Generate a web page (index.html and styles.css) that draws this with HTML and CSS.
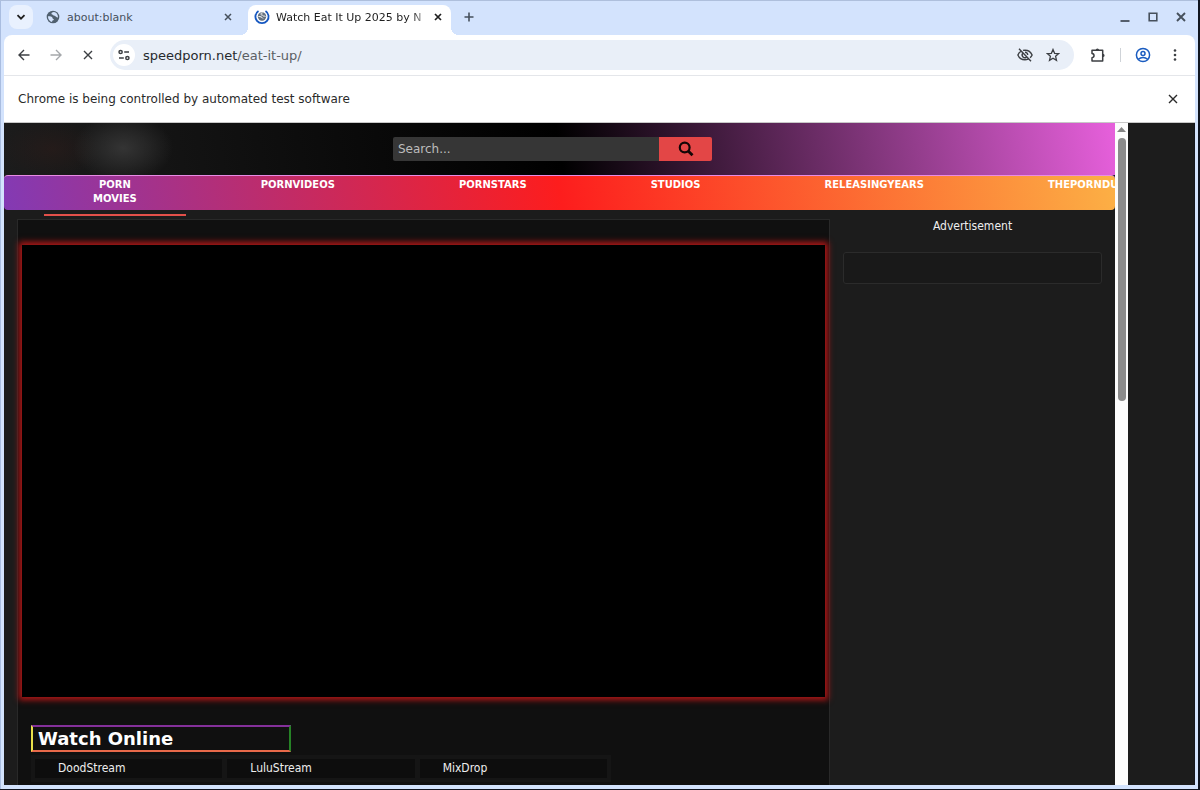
FILE: index.html
```html
<!DOCTYPE html>
<html lang="en">
<head>
<meta charset="utf-8">
<title>Watch Eat It Up 2025</title>
<link rel="stylesheet" href="styles.css">
</head>
<body>
<div class="window">
  <div class="tabstrip">
    <button class="tab-search" aria-label="Search tabs"><svg width="10" height="10" viewBox="0 0 10 10"><path d="M1.5 3.2 5 6.7 8.500 3.2" fill="none" stroke="currentColor" stroke-width="1.8"/></svg></button>
    <div class="tab">
      <svg width="14" height="14" viewBox="0 0 14 14"><circle cx="7" cy="7" r="6.300" fill="#50606f"/><path d="M8 2C6.200 2 5 3 5.600 4.200c.6.600 1.700.2 2 1.200.3 1 1.900.2 2.300 1.200.4.900 1.400.9 2.100.6C12 4.300 10.200 2.300 8 2zM2 6.300c1.300-.2 3.200-.1 4 .8.700.7.100 1.500 1.300 1.800 1.200.4.300 1.300-.6 1.500-.8.200-.3 1.200-.8 1.600C3.400 11.300 1.800 9 2 6.300z" fill="#d3e3fd"/></svg>
      <span class="tab-title">about:blank</span>
      <button class="tab-close" aria-label="Close tab"><svg width="8" height="8" viewBox="0 0 8 8"><path d="M1 1l6 6M7 1 1 7" stroke="currentColor" stroke-width="1.500"/></svg></button>
    </div>
    <div class="tab tab-active">
      <svg width="16" height="16" viewBox="0 0 16 16"><path d="M4.500 2A6.600 6.600 0 1 0 11.500 2" fill="none" stroke="#1557c0" stroke-width="1.800"/><circle cx="8" cy="7.500" r="4.200" fill="#65717d"/><path d="M8.500 4C6 4.300 6.500 6 8.500 6.200c1 1.500 2 .5 3 1.300M4.500 7.500c2 0 3.500.5 4.500 2" fill="none" stroke="#fff" stroke-width="1"/></svg>
      <span class="tab-title tab-fade">Watch Eat It Up 2025 by N</span>
      <button class="tab-close" aria-label="Close tab"><svg width="8" height="8" viewBox="0 0 8 8"><path d="M1 1l6 6M7 1 1 7" stroke="currentColor" stroke-width="1.700"/></svg></button>
    </div>
    <button class="new-tab" aria-label="New tab"><svg width="10" height="10" viewBox="0 0 10 10"><path d="M5 .5v9M.5 5h9" stroke="currentColor" stroke-width="1.600"/></svg></button>
    <div class="window-controls">
      <button aria-label="Minimize"><svg width="10" height="10" viewBox="0 0 10 10"><path d="M.5 9h9" stroke="currentColor" stroke-width="1.800"/></svg></button>
      <button aria-label="Maximize"><svg width="10" height="10" viewBox="0 0 10 10"><path d="M1.200 1.200h7.600v7.600H1.200z" fill="none" stroke="currentColor" stroke-width="1.600"/></svg></button>
      <button aria-label="Close"><svg width="10" height="10" viewBox="0 0 10 10"><path d="M1 1l8 8M9 1 1 9" stroke="currentColor" stroke-width="1.900"/></svg></button>
    </div>
  </div>

  <div class="toolbar">
    <button class="tool" aria-label="Back"><svg width="12" height="12" viewBox="0 0 12 12"><path d="M11.500 6H1.200M6 1 1 6l5 5" fill="none" stroke="currentColor" stroke-width="1.400"/></svg></button>
    <button class="tool tool-off" aria-label="Forward"><svg width="12" height="12" viewBox="0 0 12 12"><path d="M.5 6h10.300M6 1l5 5-5 5" fill="none" stroke="currentColor" stroke-width="1.400"/></svg></button>
    <button class="tool" aria-label="Stop loading"><svg width="10" height="10" viewBox="0 0 10 10"><path d="M1 1l8 8M9 1 1 9" stroke="currentColor" stroke-width="1.400"/></svg></button>
    <div class="omnibox">
      <button class="site-info" aria-label="View site information"><svg width="12" height="12" viewBox="0 0 12 12"><g fill="none" stroke="currentColor" stroke-width="1.500"><circle cx="2.600" cy="3" r="1.600"/><path d="M6.200 3H11M1 9h4.800"/><circle cx="9.400" cy="9" r="1.600"/></g></svg></button>
      <a class="url" href="#">speedporn.net<span class="url-path">/eat-it-up/</span></a>
      <button class="omni-icon" aria-label="Third-party cookies blocked"><svg width="16" height="14" viewBox="0 0 16 14"><g fill="none" stroke="currentColor" stroke-width="1.400"><path d="M4.500 3C2.800 3.900 1.500 5.300.9 7c1.200 2.900 3.900 4.800 7.100 4.800 1.200 0 2.300-.3 3.300-.7M6 2.400C6.600 2.200 7.300 2.200 8 2.200c3.200 0 5.900 1.900 7.100 4.800-.4 1.100-1.100 2-2 2.800M2 .8l12 12.400"/><path d="M5.800 5.300a2.700 2.700 0 0 0 3.800 3.800M8 4.300A2.700 2.700 0 0 1 10.700 7"/></g></svg></button>
      <button class="omni-icon" aria-label="Bookmark this tab"><svg width="14" height="14" viewBox="0 0 14 14"><path d="M7 1.500l1.600 3.800 4.100.3-3.100 2.700.9 4L7 10.200l-3.500 2.100.9-4-3.100-2.700 4.100-.3z" fill="none" stroke="currentColor" stroke-width="1.300"/></svg></button>
    </div>
    <button class="tool" aria-label="Extensions"><svg width="16" height="16" viewBox="0 0 16 16"><path d="M2 3.200h10.700V14H2v-3.300c2.700-.3 2.700-4 0-4.300z" fill="none" stroke="currentColor" stroke-width="1.500" stroke-linejoin="round"/><path d="M5.700 3.300a1.700 1.900 0 0 1 3.400 0zM12.700 6.700a1.900 1.700 0 0 1 0 3.400z" fill="currentColor"/></svg></button>
    <span class="tool-divider"></span>
    <button class="tool tool-profile" aria-label="Profile"><svg width="16" height="16" viewBox="0 0 16 16"><g fill="none" stroke="currentColor" stroke-width="1.500"><circle cx="8" cy="8" r="6.600"/><circle cx="8" cy="6.400" r="2"/><path d="M3.400 12.300c2.500-2.400 6.700-2.400 9.200 0"/></g></svg></button>
    <button class="tool" aria-label="Chrome menu"><svg width="4" height="12" viewBox="0 0 4 12"><g fill="currentColor"><circle cx="2" cy="1.500" r="1.300"/><circle cx="2" cy="6" r="1.300"/><circle cx="2" cy="10.500" r="1.300"/></g></svg></button>
  </div>

  <div class="infobar">
    <span>Chrome is being controlled by automated test software</span>
    <button class="tool" aria-label="Dismiss"><svg width="10" height="10" viewBox="0 0 10 10"><path d="M1 1l8 8M9 1 1 9" stroke="currentColor" stroke-width="1.400"/></svg></button>
  </div>

  <div class="viewport">
    <div class="site">
      <header class="site-header">
        <div class="site-logo"></div>
        <form class="search">
          <input type="text" placeholder="Search..." aria-label="Search">
          <button type="button" aria-label="Search"><svg width="16" height="16" viewBox="0 0 16 16"><circle cx="6.700" cy="6.500" r="4.900" fill="none" stroke="currentColor" stroke-width="2.200"/><path d="M10.200 10l4.300 4.300" stroke="currentColor" stroke-width="2.800"/></svg></button>
        </form>
      </header>
      <nav class="site-nav">
        <a class="current" href="#">PORN MOVIES</a>
        <a href="#">PORNVIDEOS</a>
        <a href="#">PORNSTARS</a>
        <a href="#">STUDIOS</a>
        <a href="#">RELEASINGYEARS</a>
        <a href="#">THEPORNDU</a>
      </nav>
      <div class="content">
        <main class="panel">
          <div class="player"></div>
          <h2 class="watch-title">Watch Online</h2>
          <div class="servers">
            <a href="#">DoodStream</a>
            <a href="#">LuluStream</a>
            <a href="#">MixDrop</a>
          </div>
        </main>
        <aside class="sidebar">
          <p>Advertisement</p>
          <div class="ad-box"></div>
        </aside>
      </div>
    </div>
    <div class="scrollbar">
      <svg width="9" height="5" viewBox="0 0 9 5"><path d="M0 5 4.500 0 9 5z" fill="#858585"/></svg>
      <div class="thumb"></div>
    </div>
    <div class="gutter"></div>
  </div>
</div>
</body>
</html>
```
FILE: styles.css
```css
* { box-sizing: border-box; }

body {
  margin: 0;
  background: #10151f;
  font-family: "DejaVu Sans", sans-serif;
  font-size: 12px;
}

button {
  display: flex;
  align-items: center;
  justify-content: center;
  padding: 0;
  border: 0;
  background: none;
  color: inherit;
}

a { color: inherit; text-decoration: none; }

.window {
  display: flex;
  flex-direction: column;
  height: calc(100vh - 1px);
  margin-right: 2px;
  padding: 0 3px 4px 4px;
  background: #d3e3fd;
  border-top: 1px solid #aebfdc;
  box-shadow: inset 1px 0 #a9bde0;
  overflow: hidden;
}

/* Tab strip */
.tabstrip {
  display: flex;
  align-items: flex-start;
  flex: none;
  height: 34px;
  padding: 4px 9px 0 5px;
  color: #46505c;
  font-size: 11px;
}

.tab-search {
  width: 24px;
  height: 24px;
  border-radius: 8px;
  background: #e9f1fe;
  color: #1f1f1f;
}

.tab {
  display: flex;
  align-items: center;
  gap: 7px;
  width: 203px;
  height: 24px;
  margin-left: 5px;
  padding: 0 8px;
}

.tab-active {
  position: relative;
  height: 30px;
  margin-left: 7px;
  padding: 0 8px 6px 6px;
  gap: 6px;
  border-radius: 8px 8px 0 0;
  background: #fff;
  color: #1f1f1f;
}

.tab-active::before,
.tab-active::after {
  content: "";
  position: absolute;
  bottom: 0;
  width: 8px;
  height: 8px;
}

.tab-active::before {
  right: 100%;
  background: radial-gradient(circle at 0 0, transparent 8px, #fff 8px);
}

.tab-active::after {
  left: 100%;
  background: radial-gradient(circle at 100% 0, transparent 8px, #fff 8px);
}

.tab svg { flex: none; }

.tab-title {
  flex: 1;
  overflow: hidden;
  white-space: nowrap;
}

.tab-fade {
  -webkit-mask-image: linear-gradient(to right, #000 90%, transparent 102%);
  mask-image: linear-gradient(to right, #000 90%, transparent 102%);
}

.tab-close { width: 10px; height: 16px; }

.new-tab { width: 24px; height: 24px; margin-left: 6px; }

.window-controls {
  display: flex;
  gap: 18px;
  height: 24px;
  margin-left: auto;
}

/* Toolbar */
.toolbar {
  display: flex;
  align-items: center;
  flex: none;
  height: 41px;
  padding: 0 6px;
  gap: 4px;
  border-bottom: 1px solid #e4e6ea;
  border-radius: 8px 8px 0 0;
  background: #fff;
  color: #3c3f43;
}

.tool { flex: none; width: 28px; height: 28px; }
.tool-off { color: #a5a8ab; }
.tool-profile { color: #1a5cc0; }

.omnibox {
  display: flex;
  align-items: center;
  flex: 1;
  gap: 8px;
  height: 30px;
  margin: 0 6px 0 4px;
  padding: 0 11px 0 3px;
  border-radius: 15px;
  background: #e9eff8;
}

.site-info {
  width: 22px;
  height: 22px;
  border-radius: 11px;
  background: #fff;
}

.url { flex: 1; font-size: 13px; color: #26292d; }
.url-path { color: #5b5f64; }
.omni-icon { width: 20px; height: 20px; }

.tool-divider {
  width: 1px;
  height: 14px;
  margin: 0 4px;
  background: #cfd3d8;
}

.infobar {
  display: flex;
  align-items: center;
  justify-content: space-between;
  flex: none;
  height: 47px;
  padding: 0 8px 0 14px;
  border-bottom: 1px solid #c8c8c8;
  background: #fff;
  color: #2a2a2a;
}

/* Page */
.viewport {
  display: flex;
  flex: 1;
  min-height: 0;
  background: #1c1c1c;
  font-family: "DejaVu Sans Condensed", "DejaVu Sans", sans-serif;
}

.site {
  flex: 1;
  min-width: 0;
  overflow: hidden;
  color: #eee;
}

.site-header {
  position: relative;
  display: flex;
  align-items: center;
  justify-content: center;
  height: 52px;
  padding-right: 14px;
  background: linear-gradient(80deg, #1c1c1c 0%, #000 50%, #e760dc 100%);
}

.site-logo {
  position: absolute;
  left: 0;
  top: 0;
  width: 180px;
  height: 52px;
  background:
    radial-gradient(ellipse 50px 34px at 119px 25px, #343434, #30303099 50%, transparent),
    radial-gradient(ellipse 50px 28px at 48px 26px, #2b1c1a99, transparent);
}

.search {
  position: relative;
  display: flex;
  width: 319px;
  height: 24px;
  border-radius: 2px;
  overflow: hidden;
}

.search input {
  flex: 1;
  min-width: 0;
  padding: 0 5px;
  border: 0;
  background: #363636;
  color: #ccc;
  font: 12px "DejaVu Sans", sans-serif;
}

.search input::placeholder { color: #bdbdbd; opacity: 1; }

.search button {
  width: 53px;
  background: #e34646;
  color: #130606;
}

.site-nav {
  display: flex;
  gap: 26px;
  height: 35px;
  padding: 2px 0 0 40px;
  border-top: 1px solid #e98be5;
  border-radius: 4px;
  background: linear-gradient(80deg, #833ab4 0%, #fd1d1d 50%, #fcb045 100%);
  color: #fff;
  font-family: "DejaVu Sans", sans-serif;
  font-size: 10px;
  font-weight: bold;
  line-height: 14px;
  text-align: center;
}

.site-nav a { padding: 0 49px; }

.site-nav .current { position: relative; }

.site-nav .current::after {
  content: "";
  position: absolute;
  left: 0;
  right: 0;
  top: 36px;
  height: 2px;
  background: #e2504a;
}

.content {
  display: flex;
  align-items: flex-start;
  gap: 13px;
  padding: 9px 13px 0;
}

.panel {
  flex: 1;
  min-height: 640px;
  padding: 25px 4px 0;
  border: 1px solid #292929;
  background: #101010;
}

.player {
  aspect-ratio: 16 / 9;
  background: #000;
  box-shadow: 0 0 6px 3px #b01616;
}

.watch-title {
  width: 260px;
  margin: 28px 0 0 9px;
  padding: 0 5px;
  border: 2px solid;
  border-color: #84309a #268226 #e8694a #e8e04a;
  color: #fff;
  font-family: "DejaVu Sans", sans-serif;
  font-size: 18px;
  line-height: 23px;
}

.servers {
  display: grid;
  grid-template-columns: repeat(3, 1fr);
  gap: 5px;
  width: 580px;
  margin: 3px 0 0 9px;
  padding: 4px;
  background: #151515;
}

.servers a {
  padding: 0 23px;
  background: #0d0d0d;
  line-height: 19px;
}

.sidebar {
  width: 259px;
  text-align: center;
}

.sidebar p { margin: 0 0 18px; line-height: 15px; }

.ad-box {
  height: 32px;
  border: 1px solid #2b2b2b;
  border-radius: 3px;
  background: #191919;
}

.scrollbar {
  display: flex;
  flex-direction: column;
  align-items: center;
  gap: 6px;
  width: 13px;
  padding-top: 4px;
  background: #fcfcfc;
}

.thumb {
  width: 8px;
  height: 40%;
  border-radius: 4px;
  background: #8b8b8b;
}

.gutter { width: 67px; border-right: 1px solid #15171c; }
```
